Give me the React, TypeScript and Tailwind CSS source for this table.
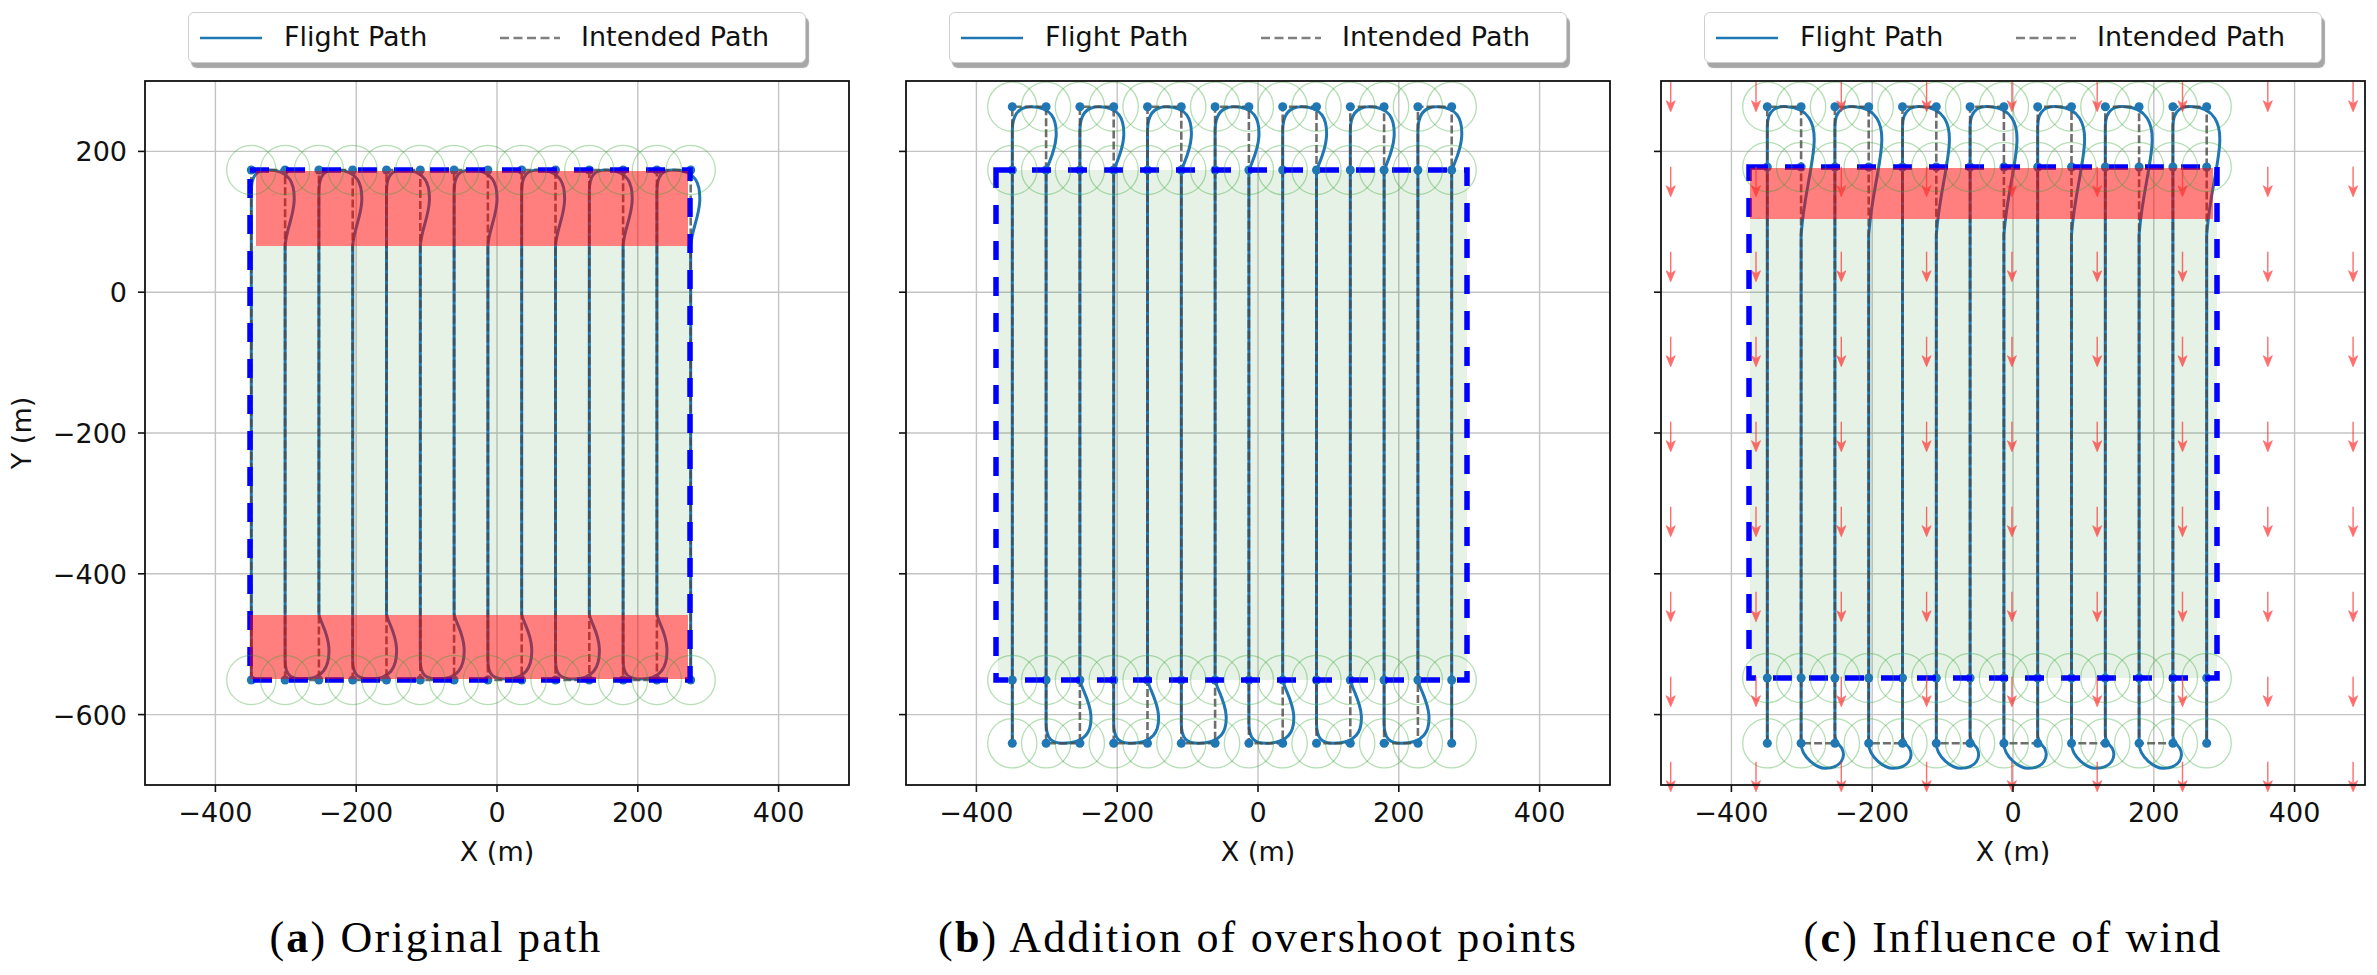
import React from 'react'

// geometry of one axes box, in px (704 x 704, x -500..500, y -700..300)
const D = 33.8
const LINES = Array.from({ length: 14 }, (_, i) => 106.3 + D * i)
const GRID = [70.4, 211.2, 352, 492.8, 633.6]
const XTICKS = ['−400', '−200', '0', '200', '400']
const YTICKS = ['200', '0', '−200', '−400', '−600']

type Box = [number, number, number, number]

interface PanelSpec {
  rect: Box
  green: Box
  reds: Box[]
  dotRows: number[]
  start: number
  end: number
  top: number
  bot: number
  topTurn: (a: number, b: number) => string
  botTurn: (a: number, b: number) => string
  wind?: boolean
}

const OT = 25.7
const OB = 662.3

const panels: Record<'a' | 'b' | 'c', PanelSpec> = {
  a: {
    rect: [105, 89, 545, 599],
    green: [108, 165, 545, 534],
    reds: [
      [111, 90, 543, 165],
      [105, 534, 543, 598],
    ],
    dotRows: [89, 599],
    start: 599,
    end: 599,
    top: 89,
    bot: 599,
    topTurn: (a, b) =>
      ` L ${a} 111 C ${a} 93 ${a + 6} 89 ${a + D / 2} 89 C ${b + 5} 89 ${b + 10} 103 ${b + 9} 121 C ${b + 8} 137 ${b + 1} 149 ${b} 165`,
    botTurn: (a, b) =>
      ` L ${a} 579 C ${a} 595 ${a + 6} 598 ${a + D * 0.55} 598 C ${b + 3} 598 ${b + 11} 587 ${b + 10} 567 C ${b + 9} 551 ${b + 2} 543 ${b} 533`,
  },
  b: {
    rect: [90, 89, 561, 599],
    green: [92, 89, 561, 599],
    reds: [],
    dotRows: [OT, 89, 599, OB],
    start: OB,
    end: OB,
    top: OT,
    bot: OB,
    topTurn: (a, b) =>
      ` L ${a} ${OT + 24} C ${a} ${OT + 6} ${a + 8} ${OT} ${a + D / 2 + 2} ${OT} C ${b + 5} ${OT} ${b + 11} ${OT + 12} ${b + 10} ${OT + 30} C ${b + 9} ${OT + 45} ${b + 3} ${OT + 55} ${b} ${OT + 64}`,
    botTurn: (a, b) =>
      ` L ${a} ${OB - 20} C ${a} ${OB - 4} ${a + 6} ${OB} ${a + D / 2} ${OB} C ${b + 6} ${OB} ${b + 12} ${OB - 12} ${b + 11} ${OB - 28} C ${b + 10} ${OB - 42} ${b + 3} ${OB - 52} ${b} ${OB - 63}`,
  },
  c: {
    rect: [88, 86, 556, 597],
    green: [89, 138, 556, 597],
    reds: [[89, 87, 552, 138]],
    dotRows: [OT, 86, 597, OB],
    start: OB,
    end: OB,
    top: OT,
    bot: OB,
    topTurn: (a, b) =>
      ` L ${a} ${OT + 20} C ${a} ${OT + 2} ${a + 10} ${OT - 1} ${a + D / 2 + 3} ${OT} C ${b + 8} ${OT + 1} ${b + 14} ${OT + 18} ${b + 13} ${OT + 36} C ${b + 12} ${OT + 60} ${b + 3} ${OT + 88} ${b} ${OT + 128}`,
    botTurn: (a, b) =>
      ` L ${a} ${OB} C ${a} ${OB + 14} ${a + 16} ${OB + 25} ${a + D * 0.72} ${OB + 25} C ${b + 7} ${OB + 25} ${b + 11} ${OB + 13} ${b + 7} ${OB + 5} C ${b + 3} ${OB} ${b} ${OB - 2} ${b} ${OB - 8}`,
    wind: true,
  },
}

function flightPath(p: PanelSpec) {
  let d = `M ${LINES[0]} ${p.start}`
  for (let i = 0; i < LINES.length - 1; i++) {
    d += i % 2 === 0 ? p.topTurn(LINES[i], LINES[i + 1]) : p.botTurn(LINES[i], LINES[i + 1])
  }
  return d + ` L ${LINES[LINES.length - 1]} ${p.end}`
}

function intendedPath(top: number, bot: number) {
  return LINES.map((x, i) => {
    const [y1, y2] = i % 2 === 0 ? [bot, top] : [top, bot]
    return `${i === 0 ? 'M' : 'L'} ${x} ${y1} L ${x} ${y2}`
  }).join(' ')
}

function WindArrows() {
  const cols = Array.from({ length: 9 }, (_, k) => 9.7 + 85.3 * k)
  const rows = Array.from({ length: 9 }, (_, r) => 0.7 + 85 * r)
  return (
    <g stroke="#ff3030" fill="#ff3030" opacity={0.7}>
      {cols.map((x) =>
        rows.map((y) => (
          <g key={`${x}-${y}`}>
            <line x1={x} y1={y} x2={x} y2={y + 26} strokeWidth={1.4} />
            <polygon points={`${x},${y + 30} ${x - 4.5},${y + 19} ${x},${y + 22} ${x + 4.5},${y + 19}`} strokeWidth={0.8} />
          </g>
        )),
      )}
    </g>
  )
}

function Axes({ kind, yLabels }: { kind: 'a' | 'b' | 'c'; yLabels?: boolean }) {
  const p = panels[kind]
  const [rx1, ry1, rx2, ry2] = p.rect
  const [gx1, gy1, gx2, gy2] = p.green
  return (
    <svg width={704} height={704} className="shrink-0 overflow-visible">
      {/* grid */}
      <g stroke="#c4c4c4" strokeWidth={1.4}>
        {GRID.map((g) => (
          <line key={`v${g}`} x1={g} y1={0} x2={g} y2={704} />
        ))}
        {GRID.map((g) => (
          <line key={`h${g}`} x1={0} y1={g} x2={704} y2={g} />
        ))}
      </g>

      <rect x={gx1} y={gy1} width={gx2 - gx1} height={gy2 - gy1} fill="#008000" opacity={0.1} />

      <path d={flightPath(p)} fill="none" stroke="#1f77b4" strokeWidth={3} />
      <path d={intendedPath(p.top, p.bot)} fill="none" stroke="#4a4a4a" strokeOpacity={0.8} strokeWidth={2.6} strokeDasharray="8 3" />

      <g fill="#1f77b4">
        {LINES.map((x) => p.dotRows.map((y) => <circle key={`${x}-${y}`} cx={x} cy={y} r={4.5} />))}
      </g>

      <rect
        x={rx1}
        y={ry1}
        width={rx2 - rx1}
        height={ry2 - ry1}
        fill="none"
        stroke="#0000ff"
        strokeWidth={5.5}
        strokeDasharray="19 17"
      />

      {p.reds.map(([x1, y1, x2, y2]) => (
        <rect key={`${x1}-${y1}`} x={x1} y={y1} width={x2 - x1} height={y2 - y1} fill="#ff0000" opacity={0.5} />
      ))}

      <g fill="none" stroke="#2ca02c" strokeOpacity={0.35} strokeWidth={1.3}>
        {LINES.map((x) => p.dotRows.map((y) => <circle key={`${x}-${y}`} cx={x} cy={y} r={24.6} />))}
      </g>

      {p.wind && <WindArrows />}

      {/* frame and ticks */}
      <rect x={0} y={0} width={704} height={704} fill="none" stroke="#111" strokeWidth={1.8} />
      <g stroke="#111" strokeWidth={1.6}>
        {GRID.map((g) => (
          <line key={`xt${g}`} x1={g} y1={704} x2={g} y2={711} />
        ))}
        {GRID.map((g) => (
          <line key={`yt${g}`} x1={-7} y1={g} x2={0} y2={g} />
        ))}
      </g>
      <g fill="#111" fontSize={27}>
        {GRID.map((g, i) => (
          <text key={`xl${g}`} x={g} y={741} textAnchor="middle">
            {XTICKS[i]}
          </text>
        ))}
        {yLabels &&
          GRID.map((g, i) => (
            <text key={`yl${g}`} x={-18} y={g + 10} textAnchor="end">
              {YTICKS[i]}
            </text>
          ))}
      </g>
    </svg>
  )
}

function Legend() {
  return (
    <div className="flex h-[51px] w-[618px] items-center rounded-[6px] border-[1.5px] border-[#cfcfcf] bg-white pl-[11px] shadow-[3px_5px_1px_rgba(0,0,0,0.35)]">
      <div className="flex w-[300px] items-center">
        <svg width={62} height={6} className="shrink-0">
          <line x1={0} y1={3} x2={62} y2={3} stroke="#1f77b4" strokeWidth={2.6} />
        </svg>
        <span className="ml-[22px] whitespace-nowrap">Flight Path</span>
      </div>
      <svg width={60} height={6} className="shrink-0">
        <line x1={0} y1={3} x2={60} y2={3} stroke="#808080" strokeWidth={2.6} strokeDasharray="9 4.5" />
      </svg>
      <span className="ml-[21px] whitespace-nowrap">Intended Path</span>
    </div>
  )
}

function Caption({ letter, text }: { letter: string; text: string }) {
  return (
    <div className="mt-[44px] whitespace-nowrap text-center font-['Liberation_Serif',serif] text-[44px] leading-[52px] tracking-[0.05em] text-black">
      (<span className="font-bold">{letter}</span>) {text}
    </div>
  )
}

export default function App() {
  return (
    <div className="flex h-[975px] w-[2377px] overflow-hidden bg-white pt-[12px] font-['DejaVu_Sans',sans-serif] text-[27px] text-[#111]">
      {/* (a) */}
      <div className="flex w-[872px] shrink-0 flex-col">
        <div className="flex pl-[145px]">
          <div className="flex w-[704px] justify-center">
            <Legend />
          </div>
        </div>
        <div className="mt-[18px] flex">
          <div className="flex h-[704px] w-[145px] shrink-0 items-center">
            <div className="flex w-[44px] justify-center">
              <span className="-rotate-90 whitespace-nowrap leading-[32px]">Y (m)</span>
            </div>
          </div>
          <Axes kind="a" yLabels />
        </div>
        <div className="mt-[51px] pl-[145px]">
          <div className="w-[704px] text-center leading-[32px]">X (m)</div>
        </div>
        <Caption letter="a" text="Original path" />
      </div>

      {/* (b) */}
      <div className="ml-[34px] flex w-[704px] shrink-0 flex-col">
        <div className="flex justify-center">
          <Legend />
        </div>
        <div className="mt-[18px] flex">
          <Axes kind="b" />
        </div>
        <div className="mt-[51px] text-center leading-[32px]">X (m)</div>
        <Caption letter="b" text="Addition of overshoot points" />
      </div>

      {/* (c) */}
      <div className="ml-[51px] flex w-[704px] shrink-0 flex-col">
        <div className="flex justify-center">
          <Legend />
        </div>
        <div className="mt-[18px] flex">
          <Axes kind="c" />
        </div>
        <div className="mt-[51px] text-center leading-[32px]">X (m)</div>
        <Caption letter="c" text="Influence of wind" />
      </div>
    </div>
  )
}
